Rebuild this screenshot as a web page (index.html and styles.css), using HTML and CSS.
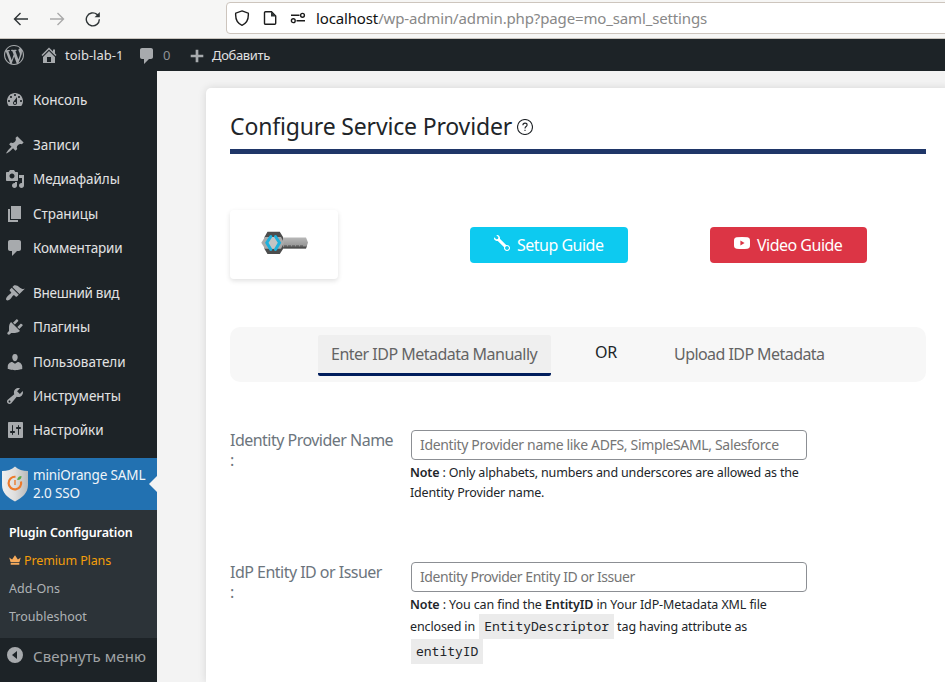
FILE: index.html
```html
<!DOCTYPE html>
<html lang="ru">
<head>
<meta charset="utf-8">
<title>miniOrange SAML 2.0 SSO</title>
<link rel="stylesheet" href="styles.css">
</head>
<body>
<div class="browser">
  <div class="nav">
    <svg class="nav-icon" viewBox="0 0 16 16"><path d="M15 8H1.5M7.500 2 1.500 8l6 6"/></svg>
    <svg class="nav-icon off" viewBox="0 0 16 16"><path d="M1 8h13.500M8.500 2l6 6-6 6"/></svg>
    <svg class="nav-icon" viewBox="0 0 16 16"><path d="M14.300 8.200A6.500 6.500 0 1 1 12 3.400L14 5.300"/><path class="fill" d="M14.800 1v5.200H9.600z"/></svg>
  </div>
  <div class="url">
    <svg class="url-icon" viewBox="0 0 16 16"><path d="M8 .9 14.300 3.200C14.700 8.500 12.500 13.500 8 15.300 3.500 13.500 1.300 8.500 1.700 3.200z"/></svg>
    <svg class="url-icon" viewBox="0 0 16 16"><path d="M3.500 1.700h6L13.700 6v7.300a1 1 0 0 1-1 1H3.500a1 1 0 0 1-1-1V2.700a1 1 0 0 1 1-1z"/><path class="fill" d="M9 1.500V6.500h5z"/></svg>
    <svg class="url-icon" viewBox="0 0 16 16"><path d="M1 5.300h8.500M6.500 10.700H15"/><circle cx="12.500" cy="5.300" r="1.900"/><circle cx="3.300" cy="10.700" r="1.900"/></svg>
    <span class="address"><b>localhost</b>/wp-admin/admin.php?page=mo_saml_settings</span>
  </div>
</div>

<div class="adminbar">
  <svg class="dash wp" viewBox="0 0 20 20"><path d="M20 10c0-5.510-4.490-10-10-10C4.480 0 0 4.490 0 10c0 5.520 4.480 10 10 10 5.510 0 10-4.480 10-10zM7.780 15.370L4.370 6.220c.55-.02 1.170-.08 1.170-.08.5-.06.44-1.130-.06-1.110 0 0-1.450.11-2.370.11-.18 0-.37 0-.58-.01C4.120 2.690 6.870 1.110 10 1.110c2.330 0 4.450.87 6.050 2.340-.68-.11-1.650.39-1.650 1.580 0 .74.45 1.360.9 2.100.35.61.55 1.360.55 2.460 0 1.490-1.400 5-1.400 5l-3.030-8.370c.54-.02.82-.17.82-.17.5-.05.44-1.250-.06-1.220 0 0-1.440.12-2.380.12-.87 0-2.330-.12-2.330-.12-.5-.03-.56 1.200-.06 1.220l.92.08 1.260 3.410zM17.410 10c.24-.64.74-1.870.43-4.250.7 1.290 1.050 2.710 1.050 4.250 0 3.290-1.730 6.240-4.400 7.780.97-2.590 1.940-5.200 2.920-7.780zM6.100 18.090C3.120 16.650 1.110 13.530 1.110 10c0-1.300.23-2.480.72-3.590C3.250 10.300 4.670 14.200 6.100 18.090zm4.030-6.630l2.580 6.980c-.86.29-1.760.45-2.710.45-.79 0-1.570-.11-2.290-.33.81-2.380 1.620-4.740 2.420-7.100z"/></svg>
  <svg class="dash home" viewBox="0 0 20 20"><path d="M16 8.500l1.530 1.530-1.060 1.060L10 4.600l-6.470 6.490-1.060-1.060L10 2.500l4 4v-2h2v4zm-6-2.460l6 5.990V18H4v-5.970zM12 17v-5H8v5h4z"/></svg>
  <span class="bar-site">toib-lab-1</span>
  <svg class="dash comment" viewBox="0 0 20 20"><path d="M5 2h9c1.100 0 2 .9 2 2v7c0 1.100-.9 2-2 2h-2l-5 5v-5H5c-1.100 0-2-.9-2-2V4c0-1.100.9-2 2-2z"/></svg>
  <span class="bar-count">0</span>
  <svg class="dash plus" viewBox="0 0 20 20"><path d="M17 8.500v3h-5.500V17h-3v-5.500H3v-3h5.500V3h3v5.500z"/></svg>
  <span class="bar-add">Добавить</span>
</div>

<div class="body">
  <div class="side">
    <ul class="menu">
      <li><svg class="dash" viewBox="0 0 20 20"><path fill-rule="evenodd" d="M3.760 16h12.480c1.100-1.370 1.760-3.110 1.760-5 0-4.420-3.580-8-8-8s-8 3.580-8 8c0 1.890.66 3.630 1.760 5zM10 4c.55 0 1 .45 1 1s-.45 1-1 1-1-.45-1-1 .45-1 1-1zM6 6c.55 0 1 .45 1 1s-.45 1-1 1-1-.45-1-1 .45-1 1-1zm8 0c.55 0 1 .45 1 1s-.45 1-1 1-1-.45-1-1 .45-1 1-1zm-5.370 5.550L12 7v6c0 1.100-.9 2-2 2s-2-.9-2-2c0-.57.24-1.080.63-1.450zM4 10c.55 0 1 .45 1 1s-.45 1-1 1-1-.45-1-1 .45-1 1-1zm12 0c.55 0 1 .45 1 1s-.45 1-1 1-1-.45-1-1 .45-1 1-1zm-5 3c0-.55-.45-1-1-1s-1 .45-1 1 .45 1 1 1 1-.45 1-1z"/></svg><span>Консоль</span></li>
      <li class="gap"><svg class="dash" viewBox="0 0 20 20"><path d="M10.440 3.020l1.820-1.820 6.360 6.350-1.830 1.820c-1.050-.68-2.480-.57-3.410.36l-.75.75c-.92.93-1.040 2.350-.35 3.410l-1.830 1.820-2.410-2.410-2.800 2.790c-.42.42-3.380 2.710-3.800 2.290s1.860-3.390 2.280-3.810l2.790-2.790L4.100 9.360l1.830-1.820c1.050.69 2.480.57 3.400-.36l.75-.75c.93-.92 1.050-2.350.36-3.410z"/></svg><span>Записи</span></li>
      <li><svg class="dash" viewBox="0 0 20 20"><path d="M13 11V4c0-.55-.45-1-1-1h-1.670L9 1H5L3.670 3H2c-.55 0-1 .45-1 1v7c0 .55.45 1 1 1h10c.55 0 1-.45 1-1zM7 4.500c1.380 0 2.500 1.120 2.500 2.500S8.380 9.500 7 9.500 4.500 8.380 4.500 7 5.620 4.500 7 4.500zM14 6h5v10.500c0 1.380-1.120 2.500-2.500 2.500S14 17.880 14 16.500s1.120-2.500 2.500-2.500c.17 0 .34.02.5.05V9h-3V6zm-4 8.050V13h2v3.500c0 1.380-1.120 2.500-2.500 2.500S7 17.880 7 16.500 8.120 14 9.500 14c.17 0 .34.02.5.05z" fill-rule="evenodd"/></svg><span class="slight">Медиафайлы</span></li>
      <li><svg class="dash" viewBox="0 0 20 20"><path d="M6 15V2h10v13H6zm-1 1h8v2H3V5h2v11z"/></svg><span class="slight">Страницы</span></li>
      <li><svg class="dash" viewBox="0 0 20 20"><path d="M5 2h9c1.100 0 2 .9 2 2v7c0 1.100-.9 2-2 2h-2l-5 5v-5H5c-1.100 0-2-.9-2-2V4c0-1.100.9-2 2-2z"/></svg><span class="snug">Комментарии</span></li>
      <li class="gap"><svg class="dash" viewBox="0 0 20 20"><path d="M14.480 11.060L7.410 3.990l1.500-1.500c.5-.56 2.300-.47 3.510.32 1.210.8 1.430 1.280 2.910 2.100 1.180.64 2.450 1.260 4.450.85zm-.71.71L6.700 4.700 4.930 6.470c-.39.39-.39 1.020 0 1.410l1.060 1.060c.39.39.39 1.030 0 1.420-.6.6-1.430 1.110-2.210 1.690-.35.26-.7.53-1.010.84C1.430 14.230.4 16.080 1.400 17.070c.99 1 2.840-.03 4.180-1.360.31-.31.58-.66.85-1.020.57-.78 1.080-1.610 1.690-2.210.39-.39 1.020-.39 1.410 0l1.060 1.060c.39.39 1.020.39 1.410 0z"/></svg><span class="snugger">Внешний вид</span></li>
      <li><svg class="dash" viewBox="0 0 20 20"><path d="M13.110 4.360L9.870 7.600 8 5.730l3.240-3.240c.35-.34 1.050-.2 1.560.32.52.51.66 1.210.31 1.550zm-8 1.770l.91-1.120 9.010 9.010-1.190.84c-.71.71-2.630 1.160-3.820 1.160H6.140L4.900 17.260c-.59.59-1.540.59-2.120 0-.59-.58-.59-1.530 0-2.120l1.240-1.240v-3.880c0-1.130.4-3.190 1.090-3.890zm7.260 3.970l3.240-3.240c.34-.35 1.040-.21 1.550.31.52.51.66 1.210.31 1.550l-3.240 3.250z"/></svg><span class="snug">Плагины</span></li>
      <li><svg class="dash" viewBox="0 0 20 20"><path d="M10 9.250c-2.270 0-2.730-3.440-2.730-3.440C7 4.020 7.820 2 9.970 2c2.160 0 2.980 2.020 2.710 3.810 0 0-.41 3.440-2.680 3.440zm0 2.570L12.720 10c2.390 0 4.520 2.330 4.520 4.530v2.490s-3.650 1.130-7.240 1.130c-3.650 0-7.240-1.130-7.240-1.130v-2.490c0-2.250 1.940-4.480 4.470-4.480z"/></svg><span>Пользователи</span></li>
      <li><svg class="dash" viewBox="0 0 20 20"><path fill-rule="evenodd" d="M16.680 9.770c-1.340 1.340-3.300 1.670-4.950.99l-5.410 6.520c-.99.99-2.590.99-3.580 0s-.99-2.590 0-3.570l6.520-5.420c-.68-1.650-.35-3.610.99-4.950 1.280-1.280 3.120-1.620 4.720-1.060l-2.890 2.890 2.820 2.820 2.860-2.870c.53 1.580.18 3.390-1.080 4.650zM3.810 16.210c.4.39 1.040.39 1.430 0 .4-.4.4-1.040 0-1.430-.39-.4-1.030-.4-1.430 0-.39.39-.39 1.030 0 1.430z"/></svg><span class="slight">Инструменты</span></li>
      <li><svg class="dash" viewBox="0 0 20 20"><path fill-rule="evenodd" d="M18 17V3c0-.55-.45-1-1-1H4c-.55 0-1 .45-1 1v14c0 .55.45 1 1 1h13c.55 0 1-.45 1-1zM8 11h1c.55 0 1 .45 1 1s-.45 1-1 1H8v1.500c0 .28-.22.5-.5.5s-.5-.22-.5-.5V13H6c-.55 0-1-.45-1-1s.45-1 1-1h1V5.500c0-.28.22-.5.5-.5s.5.220.5.5V11zm5-2h-1c-.55 0-1-.45-1-1s.45-1 1-1h1V5.500c0-.28.22-.5.5-.5s.5.220.5.5V7h1c.55 0 1 .45 1 1s-.45 1-1 1h-1v5.500c0 .28-.22.5-.5.5s-.5-.22-.5-.5V9z"/></svg><span>Настройки</span></li>
    </ul>
    <div class="current">
      <svg class="shield" viewBox="0 0 26 36">
        <defs><linearGradient id="sh"><stop offset="0" stop-color="#f0f0f0"/><stop offset=".5" stop-color="#dedede"/><stop offset="1" stop-color="#b9b9b9"/></linearGradient></defs>
        <path fill="url(#sh)" d="M13 .5C16 3.500 21 5 26 5v14c0 8-6 13-13 16.500C6 32 0 27 0 19V5c5 0 10-1.500 13-4.500z"/>
        <path fill="none" stroke="#ed7a2c" stroke-width="2.200" d="M13.500 10.800A6.300 6.300 0 1 0 19 15.500"/>
        <path fill="none" stroke="#ed7a2c" stroke-width="1.400" d="M13 14v5"/>
        <path fill="#58a84b" d="M15.200 14c.3-2.500 2-4 4.300-4 .1 2.600-1.500 4.200-4.300 4z"/>
      </svg>
      <span>miniOrange SAML<br>2.0 SSO</span>
    </div>
    <ul class="submenu">
      <li class="active">Plugin Configuration</li>
      <li class="premium"><svg class="crown" viewBox="0 0 12 10"><path d="M1.600 7.200.2 2.600l2.900 1.800L6 .2l2.900 4.200 2.900-1.800-1.400 4.600zM1.700 8h8.600v1.800H1.700z"/></svg>Premium Plans</li>
      <li>Add-Ons</li>
      <li>Troubleshoot</li>
    </ul>
    <div class="collapse">
      <svg class="dash" viewBox="0 0 20 20"><path fill-rule="evenodd" d="M10 2a8 8 0 1 0 0 16 8 8 0 0 0 0-16zm2 4v8l-5-4z"/></svg>
      <span>Свернуть меню</span>
    </div>
  </div>

  <div class="content">
    <div class="card">
      <div class="title"><span>Configure Service Provider</span>
        <svg class="help" viewBox="0 0 16 16"><circle cx="8" cy="8" r="7.500"/><path d="M5.900 6.200C5.900 4.800 6.700 4.100 8 4.100s2.100.8 2.100 1.800c0 1.600-2.100 1.700-2.100 3.500"/><path d="M8 10.700v1.200"/></svg>
      </div>
      <div class="guides">
        <div class="logo-box">
          <svg class="key" viewBox="0 0 48 24">
            <defs><linearGradient id="kb" x1="0" y1="0" x2="0" y2="1"><stop offset="0" stop-color="#b8b8b8"/><stop offset="1" stop-color="#8c8c8c"/></linearGradient></defs>
            <path fill="url(#kb)" d="M18 6.500h27l2 5-2 6H18z"/>
            <path fill="#4d4d4d" d="M23 15.500h22l1-1.500-1 3.500H21zM6.500.8h12.300L22 6v12l-3.200 5H6.500L3.500 18V6z"/>
            <path stroke="#4d4d4d" stroke-width="1" stroke-dasharray="3 1" d="M23 15h20"/>
            <path fill="#aaa" d="M4 6h16l3 5.800-3 6H4L.3 11.800z"/>
            <path fill="#c4c4c4" d="M9 6h6l3 5.800-3 6H9l-3-6z"/>
            <path fill="none" stroke="#1eb0dc" stroke-width="3" stroke-linecap="round" d="M9.800 5.500 5.800 11.800l4 6.700M14.500 5.500l4 6.300-4 6.700"/>
          </svg>
        </div>
        <div class="btn setup">
          <svg viewBox="0 0 16 16"><path fill-rule="evenodd" d="M.102 2.223A3.004 3.004 0 0 0 3.780 5.897l6.341 6.252A3.003 3.003 0 0 0 13 16a3 3 0 1 0-.851-5.878L5.897 3.781A3.004 3.004 0 0 0 2.223.1l2.141 2.142L4 4l-1.757.364zm13.370 9.019.528.026.287.445.445.287.026.529L15 13l-.242.471-.026.529-.445.287-.287.445-.529.026L13 15l-.471-.242-.529-.026-.287-.445-.445-.287-.026-.529L11 13l.242-.471.026-.529.445-.287.287-.445.529-.026L13 11z"/></svg>
          <span>Setup Guide</span>
        </div>
        <div class="btn video">
          <svg viewBox="0 0 16 16"><path fill-rule="evenodd" d="M2.500 2.200Q8 1.700 13.500 2.200 15.700 2.400 15.900 4.500q.3 3.500 0 7-.2 2.100-2.400 2.300-5.500.4-11 0Q.3 13.600.1 11.500q-.3-3.500 0-7Q.3 2.400 2.500 2.200zM6.400 5.400v5l4.200-2.500z"/></svg>
          <span>Video Guide</span>
        </div>
      </div>
      <div class="tabs">
        <div class="tab selected">Enter IDP Metadata Manually</div>
        <div class="or">OR</div>
        <div class="tab upload">Upload IDP Metadata</div>
      </div>
      <div class="row">
        <div class="label">Identity Provider Name<br>:</div>
        <div class="field">
          <input class="i-name" placeholder="Identity Provider name like ADFS, SimpleSAML, Salesforce">
          <div class="note"><b>Note</b> : Only alphabets, numbers and underscores are allowed as the<br>Identity Provider name.</div>
        </div>
      </div>
      <div class="row second">
        <div class="label">IdP Entity ID or Issuer<br>:</div>
        <div class="field">
          <input class="i-id" placeholder="Identity Provider Entity ID or Issuer">
          <div class="note"><div><b>Note</b> : You can find the <b>EntityID</b> in Your IdP-Metadata XML file</div><div class="line">enclosed in <code class="tag">EntityDescriptor</code> tag having attribute as</div><div class="line"><code class="lead">entityID</code></div></div>
        </div>
      </div>
    </div>
  </div>
</div>
</body>
</html>
```
FILE: styles.css
```css
* { box-sizing: border-box; }
html, body { margin: 0; height: 682px; overflow: hidden; }
body { width: 945px; background: #f3f3f3; color: #212529; font-family: "Noto Sans", sans-serif; font-size: 13px; display: flex; flex-direction: column; }
ul { list-style: none; margin: 0; padding: 0; }
svg { flex: none; display: block; }
span { white-space: nowrap; }

.browser { height: 39px; flex: none; background: #f6f6f5; border-bottom: 1px solid #c9c4be; display: flex; }
.nav { width: 226px; padding: 11px 0 0 13px; display: flex; gap: 20px; flex: none; }
.nav-icon { width: 16px; height: 16px; fill: none; stroke: #2e3436; stroke-width: 1.4; }
.nav-icon.off { stroke: #aaa; }
.fill { fill: #2e3436; stroke: none; }
.url { width: 740px; flex: none; margin-top: 2px; height: 32px; border: 1px solid #cdc5bd; border-radius: 4px; background: #fff; display: flex; align-items: center; padding-left: 7px; }
.url-icon { width: 16px; height: 16px; margin-right: 12px; fill: none; stroke: #1c1c1c; stroke-width: 1.4; }
.address { font-size: 15px; color: #888; margin-left: -2px; letter-spacing: -.14px; }
.address b { font-weight: 400; color: #111; }

.dash { width: 20px; height: 20px; fill: #a7aaad; }
.adminbar { height: 32px; flex: none; background: #1d2327; color: #e0e0e1; display: flex; align-items: center; padding-left: 4px; }
.home { margin-left: 15px; }
.bar-site { margin-left: 6px; width: 72px; }
.comment { width: 20px; height: 20px; margin-top: 2px; }
.bar-count { color: #8f9296; margin-left: 6px; width: 20px; }
.plus { width: 18px; height: 18px; margin-left: 5px; margin-top: 1px; }
.bar-add { margin-left: 6px; letter-spacing: -.35px; }

.body { display: flex; flex: 1; min-height: 0; }
.side { width: 157px; flex: none; background: #1d2327; padding-top: 12px; color: #e2e2e3; overflow: hidden; position: relative; z-index: 1; }
.menu { font-size: 13.5px; padding-bottom: 10.7px; }
.menu li { height: 34.3px; display: flex; align-items: center; padding-left: 5px; gap: 8px; }
.menu .gap { margin-top: 10.7px; }
.slight { letter-spacing: -.08px; }
.snug { letter-spacing: -.17px; }
.snugger { letter-spacing: -.29px; }
.current { height: 52px; background: #2271b1; display: flex; align-items: center; position: relative; padding-left: 2px; gap: 5px; font-size: 13.5px; line-height: 18px; letter-spacing: -.14px; color: #f0f5f9; }
.current::after { content: ""; position: absolute; right: 0; top: 18px; border: 8px solid transparent; border-left: 0; border-right-color: #f3f3f3; }
.shield { width: 26px; height: 36px; }
.submenu { height: 128px; background: #2c3338; padding: 8px 0 0 9px; font-size: 12.5px; color: #aeb2b5; }
.submenu li { height: 28px; display: flex; align-items: center; white-space: nowrap; }
.submenu .active { color: #fff; font-weight: 600; letter-spacing: -.13px; }
.submenu .premium { color: #f59f0a; gap: 3px; letter-spacing: -.12px; }
.crown { width: 12px; height: 10px; fill: #f8ac5c; }
.collapse { height: 36px; display: flex; align-items: center; padding-left: 5px; gap: 8px; color: #a0a3a6; font-size: 15px; letter-spacing: .05px; }
.collapse svg { margin-top: -2px; }

.content { padding: 17px 0 0 49px; flex: none; }
.card { width: 745px; height: 594px; background: #fff; border-radius: 5px 5px 0 0; box-shadow: 0 0 8px rgba(0,0,0,.12); padding: 22px 24px 0; }
.title { width: 696px; height: 44px; border-bottom: 5px solid #1f3668; display: flex; align-items: flex-start; font-size: 23px; line-height: 32px; letter-spacing: -.16px; }
.help { width: 16px; height: 16px; margin: 9px 0 0 5px; fill: none; stroke: #212529; stroke-width: 1.1; }
.guides { display: flex; height: 70px; margin-top: 56px; align-items: center; }
.logo-box { width: 108px; height: 69px; margin-bottom: 1px; border-radius: 4px; box-shadow: 0 2px 5px rgba(0,0,0,.12); padding: 21px 0 0 31px; }
.key { width: 48px; height: 24px; }
.btn { height: 36px; border-radius: 4px; color: #fff; font-size: 16px; letter-spacing: -.51px; display: flex; align-items: center; padding-left: 24px; }
.btn svg { width: 16px; height: 16px; fill: #fff; margin-right: 7px; margin-bottom: 4px; }
.setup { width: 158px; background: #0dcaf0; margin-left: 132px; }
.video { width: 157px; background: #dc3545; margin-left: 82px; }
.tabs { width: 696px; height: 55px; margin-top: 47px; background: #f7f7f7; border-radius: 10px; display: flex; padding: 8px 0 0 88px; font-size: 16px; color: #646464; line-height: 38px; white-space: nowrap; }
.tab { letter-spacing: -.51px; }
.upload { letter-spacing: -.56px; }
.selected { width: 233px; height: 41px; background: #efefef; border-bottom: 3px solid #001d5c; border-radius: 2px; padding-left: 13px; }
.or { width: 123px; padding-left: 44px; color: #212529; line-height: 34px; letter-spacing: -.3px; }
.row { display: flex; margin-top: 48px; height: 84px; }
.label { width: 181px; flex: none; font-size: 16px; line-height: 20px; color: #6c757d; letter-spacing: -.52px; }
.row input { display: block; width: 396px; height: 30px; border: 1px solid #8c8f94; border-radius: 4px; padding: 0 8px 2px; font: 14px "Noto Sans", sans-serif; background: #fff; margin: 0; }
.row input::placeholder { color: #757575; opacity: 1; }
.row .i-name { letter-spacing: -.34px; }
.row .i-id { letter-spacing: -.44px; }
.note { font-size: 12.5px; line-height: 20px; letter-spacing: -.16px; white-space: nowrap; padding-top: 3px; margin-left: -1px; }
.second .note { letter-spacing: -.11px; }
.note b { font-weight: 600; }
.line { height: 25px; line-height: 22px; }
.note .line { letter-spacing: -.13px; }
.note code { font-family: "Noto Sans Mono", "DejaVu Sans Mono", monospace; font-size: 13px; letter-spacing: 0; background: #ebebeb; padding: 3px 5px 4px; }
.note .tag { margin-left: 1px; }
.note .lead { margin-left: 1px; }
```
